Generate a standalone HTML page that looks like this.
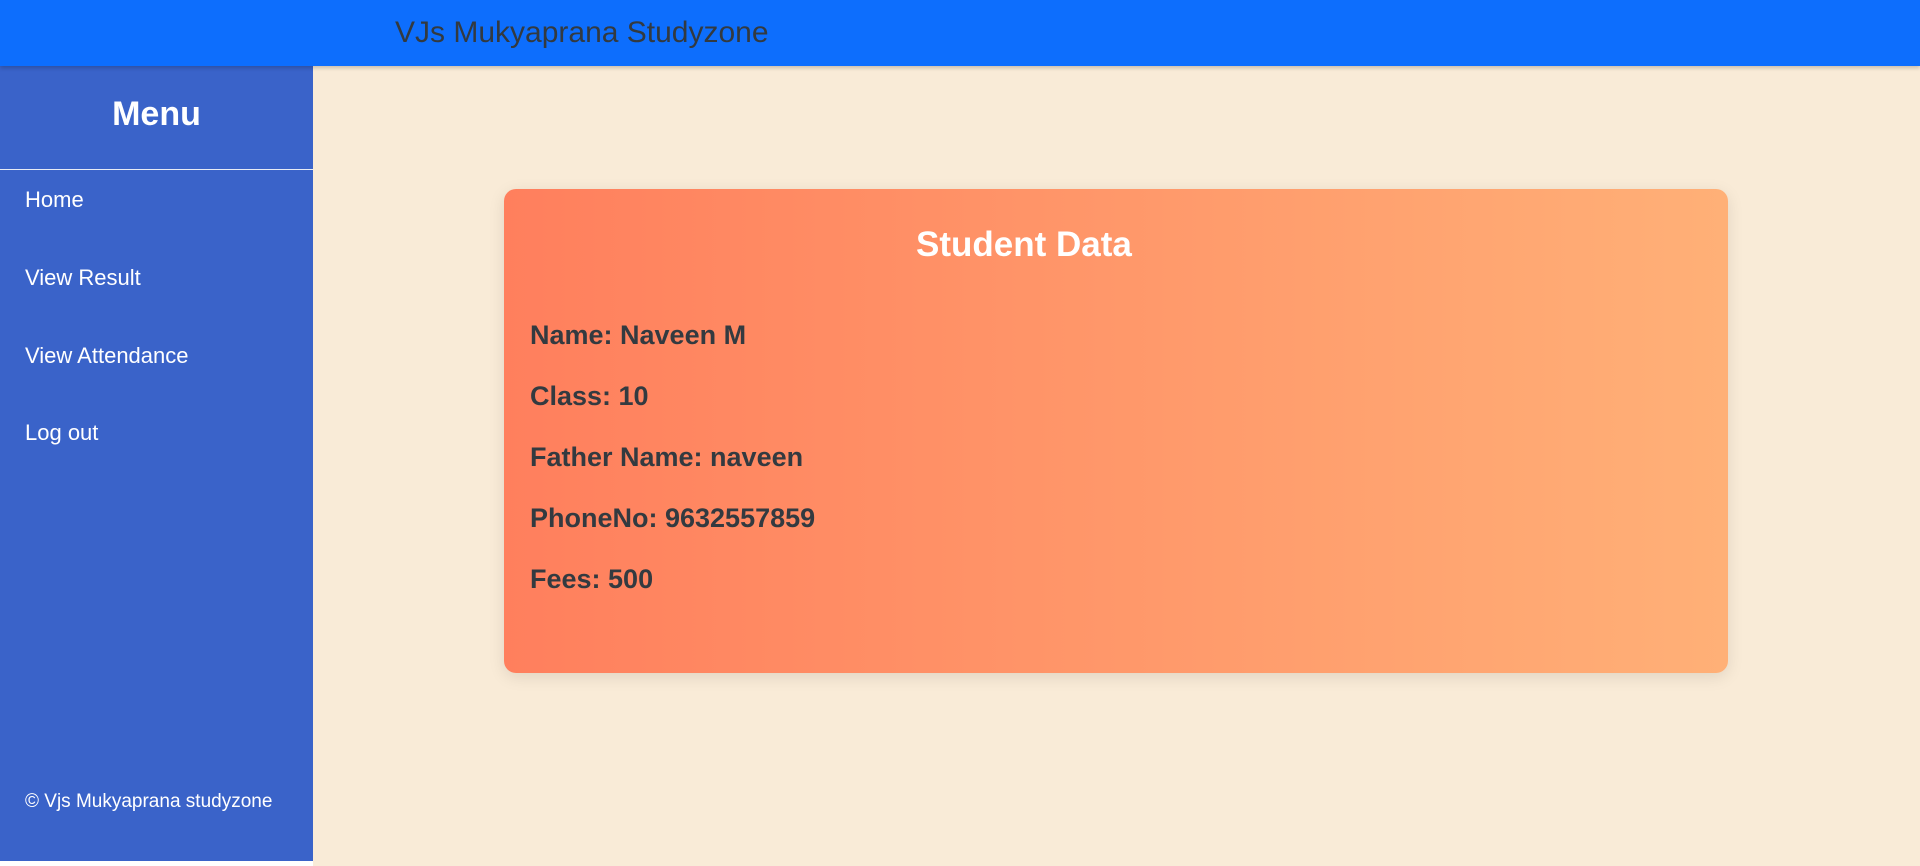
<!DOCTYPE html>
<html><head><meta charset="utf-8"><style>
*{margin:0;padding:0;box-sizing:border-box}
body{width:1920px;height:866px;background:#fff;font-family:"Liberation Sans",sans-serif;position:relative;overflow:hidden}
.top{position:absolute;left:0;top:0;width:1920px;height:66px;background:#0d6efd;box-shadow:0 2px 4px rgba(0,0,0,.2);z-index:2}
.top span{position:absolute;left:395px;top:16px;font-size:30px;color:#333a40}
.side{position:absolute;left:0;top:66px;width:313px;height:795px;background:#3a63c9;color:#fff}
.side h2{position:absolute;top:29px;width:100%;text-align:center;font-size:34px;font-weight:bold}
.side hr{position:absolute;top:103px;width:100%;border:0;border-top:1px solid #e8ecf5}
.side a{position:absolute;left:25px;font-size:22px;color:#fff;text-decoration:none}
.side .f{position:absolute;left:25px;top:725px;font-size:19px}
.main{position:absolute;left:313px;top:66px;width:1607px;height:800px;background:#f9ebd7}
.card{position:absolute;left:191px;top:123px;width:1224px;height:484px;border-radius:12px;background:linear-gradient(90deg,#ff7f5d,#ffb077);box-shadow:0 4px 16px rgba(0,0,0,.1)}
.card h3{position:absolute;top:36px;left:412px;color:#fff;font-size:35px;font-weight:bold}
.card p{position:absolute;left:26px;font-size:27px;color:#333a40;font-weight:bold}
</style></head><body>
<div class="top"><span>VJs Mukyaprana Studyzone</span></div>
<div class="side"><h2>Menu</h2><hr>
<a style="top:121px">Home</a><a style="top:199px">View Result</a><a style="top:277px">View Attendance</a><a style="top:354px">Log out</a>
<div class="f">© Vjs Mukyaprana studyzone</div></div>
<div class="main"><div class="card"><h3>Student Data</h3>
<p style="top:131px">Name: Naveen M</p>
<p style="top:192px">Class: 10</p>
<p style="top:253px">Father Name: naveen</p>
<p style="top:314px">PhoneNo: 9632557859</p>
<p style="top:375px">Fees: 500</p>
</div></div>
</body></html>
